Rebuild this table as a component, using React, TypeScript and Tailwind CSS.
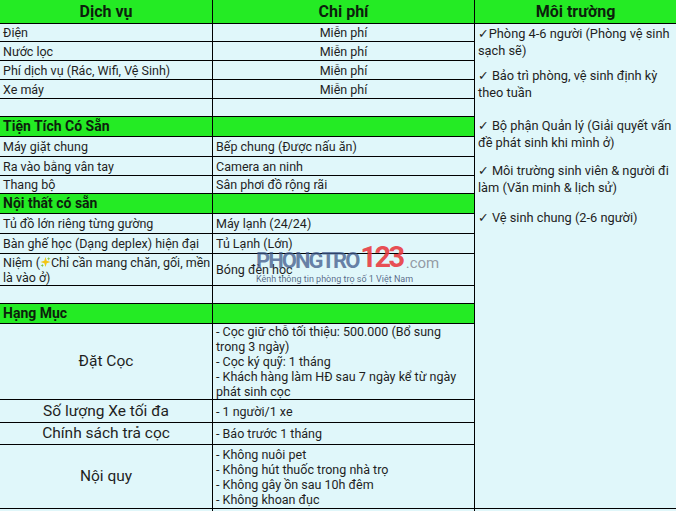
import React from 'react';

type Row = {
  a?: React.ReactNode;
  b?: React.ReactNode;
  h: string;
  kind?: 'plain' | 'free' | 'section' | 'item';
};

const Sparkle = () => (
  <svg width="11" height="12" viewBox="0 0 12 12" className="inline-block align-[-1px]">
    <path d="M6 0.5 L7.3 4.7 L11.5 6 L7.3 7.3 L6 11.5 L4.7 7.3 L0.5 6 L4.7 4.7 Z" fill="#f3c614" />
    <path d="M9.5 0.5 L10 2 L11.5 2.5 L10 3 L9.5 4.5 L9 3 L7.5 2.5 L9 2 Z" fill="#7cc242" />
    <path d="M2.5 8 L3 9.3 L4.3 9.8 L3 10.3 L2.5 11.6 L2 10.3 L0.7 9.8 L2 9.3 Z" fill="#7cc242" />
  </svg>
);

const rows: Row[] = [
  { a: 'Điện', b: 'Miễn phí', h: 'h-[18px]', kind: 'free' },
  { a: 'Nước lọc', b: 'Miễn phí', h: 'h-[19px]', kind: 'free' },
  { a: 'Phí dịch vụ (Rác, Wifi, Vệ Sinh)', b: 'Miễn phí', h: 'h-[19px]', kind: 'free' },
  { a: 'Xe máy', b: 'Miễn phí', h: 'h-[19px]', kind: 'free' },
  { h: 'h-[18px]' },
  { a: 'Tiện Tích Có Sẵn', h: 'h-[20px]', kind: 'section' },
  { a: 'Máy giặt chung', b: 'Bếp chung (Được nấu ăn)', h: 'h-[20px]' },
  { a: 'Ra vào bằng vân tay', b: 'Camera an ninh', h: 'h-[19px]' },
  { a: 'Thang bộ', b: 'Sân phơi đồ rộng rãi', h: 'h-[18px]' },
  { a: 'Nội thất có sẵn', h: 'h-[20px]', kind: 'section' },
  { a: 'Tủ đồ lớn riêng từng gường', b: 'Máy lạnh (24/24)', h: 'h-[20px]' },
  { a: 'Bàn ghế học (Dạng deplex) hiện đại', b: 'Tủ Lạnh (Lớn)', h: 'h-[20px]' },
  {
    a: (
      <span className="whitespace-nowrap">
        Niệm (<Sparkle />Chỉ cần mang chăn, gối, mền
        <br />
        là vào ở)
      </span>
    ),
    b: 'Bóng đèn học',
    h: 'h-[32px]',
  },
  { h: 'h-[18px]' },
  { a: 'Hạng Mục', h: 'h-[20px]', kind: 'section' },
  {
    a: 'Đặt Cọc',
    b: (
      <>
        - Cọc giữ chỗ tối thiệu: 500.000 (Bổ sung trong 3 ngày)
        <br />- Cọc ký quỹ: 1 tháng
        <br />- Khách hàng làm HĐ sau 7 ngày kể từ ngày phát sinh cọc
      </>
    ),
    h: 'h-[76px]',
    kind: 'item',
  },
  { a: 'Số lượng Xe tối đa', b: '- 1 người/1 xe', h: 'h-[23px]', kind: 'item' },
  { a: 'Chính sách trả cọc', b: '- Báo trước 1 tháng', h: 'h-[22px]', kind: 'item' },
  {
    a: 'Nội quy',
    b: (
      <>
        - Không nuôi pet
        <br />- Không hút thuốc trong nhà trọ
        <br />- Không gây ồn sau 10h đêm
        <br />- Không khoan đục
      </>
    ),
    h: 'h-[64px]',
    kind: 'item',
  },
];

const notes = [
  { text: '✓Phòng 4-6 người (Phòng vệ sinh sạch sẽ)', mt: 'mt-0' },
  { text: '✓ Bảo trì phòng, vệ sinh định kỳ theo tuần', mt: 'mt-[8px]' },
  { text: '✓ Bộ phận Quản lý (Giải quyết vấn đề phát sinh khi mình ở)', mt: 'mt-[16px]' },
  { text: '✓ Môi trường sinh viên & người đi làm (Văn minh & lịch sử)', mt: 'mt-[11px]' },
  { text: '✓ Vệ sinh chung (2-6 người)', mt: 'mt-[13px]' },
];

const BodyRow: React.FC<{ row: Row }> = ({ row }) => {
  const section = row.kind === 'section';
  const item = row.kind === 'item';
  return (
    <div className={`flex border-b border-black ${row.h} ${section ? 'bg-[#24eb24]' : ''}`}>
      <div
        className={`w-[213px] shrink-0 border-r border-black flex items-center leading-[15px] ${
          section
            ? 'pl-[3px] font-bold text-[14px] text-[#0c1f0c]'
            : item
            ? 'justify-center text-[15.5px]'
            : 'pl-[3px] text-[12.5px]'
        }`}
      >
        {row.a}
      </div>
      <div
        className={`w-[262px] shrink-0 border-r border-black flex items-center text-[12.5px] leading-[15px] ${
          row.kind === 'free' ? 'justify-center' : 'pl-[3px] pr-[6px]'
        }`}
      >
        {row.b && <div>{row.b}</div>}
      </div>
    </div>
  );
};

const App: React.FC = () => {
  return (
    <div className="w-[676px] h-[511px] overflow-hidden bg-[#e0f7fa] text-[#1f1f1f] [font-family:Roboto,'DejaVu_Sans',sans-serif]">
      <div className="relative w-[690px]">
        {/* header */}
        <div className="flex h-[24px] border-b border-black bg-[#24eb24] text-[16px] font-bold text-[#0c1f0c]">
          <div className="w-[213px] shrink-0 border-r border-black flex items-center justify-center">Dịch vụ</div>
          <div className="w-[262px] shrink-0 border-r border-black flex items-center justify-center">Chi phí</div>
          <div className="w-[201px] flex items-center justify-center">Môi trường</div>
        </div>

        <div className="flex">
          <div className="flex flex-col">
            {rows.map((r, i) => (
              <BodyRow key={i} row={r} />
            ))}
          </div>
          <div className="flex-1 border-b border-black pl-[3px] pr-[10px] pt-[1px] text-[12.8px] leading-[17px]">
            {notes.map((n, i) => (
              <p key={i} className={n.mt}>
                {n.text}
              </p>
            ))}
          </div>
        </div>

        {/* next row, cut off */}
        <div className="flex h-[20px]">
          <div className="w-[213px] shrink-0 border-r border-black" />
          <div className="w-[262px] shrink-0 border-r border-black" />
          <div className="flex-1" />
        </div>

        {/* watermark */}
        <div className="absolute left-[256px] top-[243px] pointer-events-none select-none">
          <div className="flex items-end leading-none">
            <span className="text-[22px] font-bold tracking-[-2px] text-[#3f5a8a]/75">PHONGTRO</span>
            <span className="text-[29px] font-bold tracking-[-2.5px] text-[#e8383d]/90 ml-[2px]">123</span>
            <span className="text-[15px] text-[#8a8f99]/90 ml-[3px] mb-[1px]">.com</span>
          </div>
          <div className="text-[9px] leading-[11px] text-[#4a5a7a]/90 mt-[2px]">Kênh thông tin phòng trọ số 1 Việt Nam</div>
        </div>
      </div>
    </div>
  );
};

export default App;
